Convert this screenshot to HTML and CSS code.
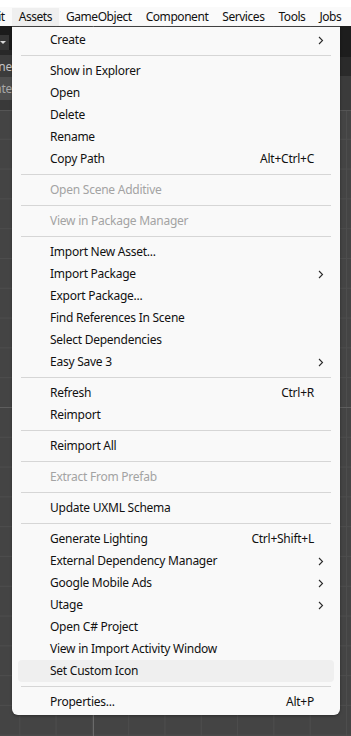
FILE: index.html
```html
<!DOCTYPE html>
<html lang="en">
<head>
    <meta charset="UTF-8">
    <meta name="viewport" content="width=device-width, initial-scale=1.0">
    <title>Assets menu</title>
    <link rel="stylesheet" href="styles.css">
</head>
<body>
<div class="titlebar"></div>
<div class="menubar">
    <span class="menubar-item">Edit</span>
    <span class="menubar-item active">Assets</span>
    <span class="menubar-item">GameObject</span>
    <span class="menubar-item">Component</span>
    <span class="menubar-item">Services</span>
    <span class="menubar-item">Tools</span>
    <span class="menubar-item">Jobs</span>
</div>

<div class="editor">
    <div class="strip strip-left">
        <div class="blk blk-top"></div>
        <div class="blk blk-drop"><span class="tri"></span></div>
        <div class="blk blk-gap"></div>
        <div class="blk blk-tab"><span class="clip">Scene</span></div>
        <div class="blk blk-field"><span class="clip">Inte</span></div>
        <div class="blk blk-under"></div>
    </div>
    <div class="strip strip-right">
        <div class="blk blk-r1"></div>
        <div class="blk blk-r2"></div>
        <div class="blk blk-r3"></div>
    </div>

    <div class="menu" id="menu"></div>
</div>

<script>
    const menuData = [
        { label: "Create", sub: true },
        "-",
        { label: "Show in Explorer" },
        { label: "Open" },
        { label: "Delete" },
        { label: "Rename" },
        { label: "Copy Path", key: "Alt+Ctrl+C" },
        "-",
        { label: "Open Scene Additive", disabled: true },
        "-",
        { label: "View in Package Manager", disabled: true },
        "-",
        { label: "Import New Asset..." },
        { label: "Import Package", sub: true },
        { label: "Export Package..." },
        { label: "Find References In Scene" },
        { label: "Select Dependencies" },
        { label: "Easy Save 3", sub: true },
        "-",
        { label: "Refresh", key: "Ctrl+R" },
        { label: "Reimport" },
        "-",
        { label: "Reimport All" },
        "-",
        { label: "Extract From Prefab", disabled: true },
        "-",
        { label: "Update UXML Schema" },
        "-",
        { label: "Generate Lighting", key: "Ctrl+Shift+L" },
        { label: "External Dependency Manager", sub: true },
        { label: "Google Mobile Ads", sub: true },
        { label: "Utage", sub: true },
        { label: "Open C# Project" },
        { label: "View in Import Activity Window" },
        { label: "Set Custom Icon", hover: true },
        "-",
        { label: "Properties...", key: "Alt+P" }
    ];

    const menu = document.getElementById('menu');

    menuData.forEach(item => {
        if (item === "-") {
            const sep = document.createElement('div');
            sep.className = 'menu-sep';
            menu.appendChild(sep);
            return;
        }

        const row = document.createElement('div');
        row.className = 'menu-item';
        if (item.disabled) row.classList.add('disabled');
        if (item.hover) row.classList.add('hover');

        const label = document.createElement('span');
        label.className = 'menu-label';
        label.textContent = item.label;
        row.appendChild(label);

        if (item.key) {
            const key = document.createElement('span');
            key.className = 'menu-key';
            key.textContent = item.key;
            row.appendChild(key);
        }

        if (item.sub) {
            row.insertAdjacentHTML('beforeend',
                '<svg class="menu-arrow" width="6" height="9" viewBox="0 0 6 9"><polyline points="1,1 4.5,4.5 1,8" fill="none" stroke="#2b2b2b" stroke-width="1.1"/></svg>');
        }

        menu.appendChild(row);
    });
</script>
</body>
</html>
```

FILE: styles.css
```css
body {
    margin: 0;
    font-family: "Noto Sans", "Open Sans", sans-serif;
    font-size: 12px;
    letter-spacing: -0.25px;
    color: #111;
    background-color: #444;
    height: 736px;
    overflow: hidden;
}
.titlebar {
    height: 7px;
    background-color: #fff;
}
.menubar {
    height: 19px;
    display: flex;
    align-items: stretch;
    background-color: #fafafa;
    margin-left: -22px;
    white-space: nowrap;
    letter-spacing: -0.45px;
}
.menubar-item {
    padding: 0 7px;
    line-height: 18px;
    margin-top: 1px;
}
.menubar-item.active {
    background-color: #efefef;
}
.editor {
    position: relative;
    height: 710px;
    display: flex;
    justify-content: space-between;
    align-items: flex-start;
    background-color: #444;
    background-image:
        linear-gradient(to right, transparent 93px, #6a6a6a 93px, #6a6a6a 94px, transparent 94px),
        linear-gradient(to bottom, transparent 381px, #5e5e5e 381px, #5e5e5e 382px, transparent 382px),
        linear-gradient(to right, #4d4d4d 1px, transparent 1px),
        linear-gradient(to bottom, #4d4d4d 1px, transparent 1px);
    background-size: 100% 100%, 100% 100%, 36.3px 100%, 100% 29.8px;
    background-position: 0 0, 0 0, 19.3px 0, 0 23.4px;
}
.strip {
    display: flex;
    flex-direction: column;
}
.strip-left {
    width: 12px;
}
.strip-right {
    width: 11px;
}
.blk {
    overflow: hidden;
    white-space: nowrap;
    position: relative;
}
.blk-top {
    height: 9px;
    background-color: #1b1b1b;
}
.blk-drop {
    height: 15px;
    background-color: #1b1b1b;
}
.blk-drop .tri {
    display: block;
    width: 9px;
    height: 15px;
    background-color: #353535;
    position: relative;
}
.blk-drop .tri::after {
    content: "";
    position: absolute;
    left: 0;
    top: 6px;
    border-left: 3px solid transparent;
    border-right: 3px solid transparent;
    border-top: 3px solid #d8d8d8;
}
.blk-gap {
    height: 5px;
    background-color: #282828;
}
.blk-tab {
    height: 22px;
    background-color: #3c3c3c;
    color: #c4c4c4;
    line-height: 24px;
}
.blk-field {
    height: 23px;
    background-color: #4f4f4f;
    color: #a8a8a8;
    line-height: 23px;
}
.clip {
    display: block;
    text-align: right;
    width: 12px;
    direction: rtl;
}
.blk-under {
    height: 10px;
    background-color: #393939;
    border-bottom: 1px solid #555;
}
.blk-r1 {
    height: 31px;
    background-color: #1d1d1d;
}
.blk-r2 {
    height: 19px;
    background-color: #2a2a2a;
}
.blk-r3 {
    height: 34px;
    background-color: #3b3b3b;
    border-bottom: 1px solid #555;
}
.menu {
    position: absolute;
    top: 1px;
    left: 12px;
    width: 328px;
    padding: 2px 0;
    background-color: #f9f9f9;
    border-radius: 0 0 6px 6px;
    box-shadow: 0 1px 3px rgba(0,0,0,0.35);
}
.menu-item {
    height: 22px;
    line-height: 22px;
    display: flex;
    align-items: center;
    padding: 0 26px 0 38px;
    position: relative;
    white-space: nowrap;
}
.menu-item.hover::before {
    content: "";
    position: absolute;
    left: 6px;
    right: 6px;
    top: 0;
    bottom: 0;
    background-color: #efefef;
    border-radius: 4px;
}
.menu-label, .menu-key {
    position: relative;
}
.menu-label {
    flex: 1;
}
.menu-item.disabled {
    color: #a3a3a3;
}
.menu-arrow {
    position: absolute;
    right: 16px;
    top: 7px;
}
.menu-sep {
    height: 1px;
    margin: 4px 9px;
    background-color: #d6d6d6;
}
```
